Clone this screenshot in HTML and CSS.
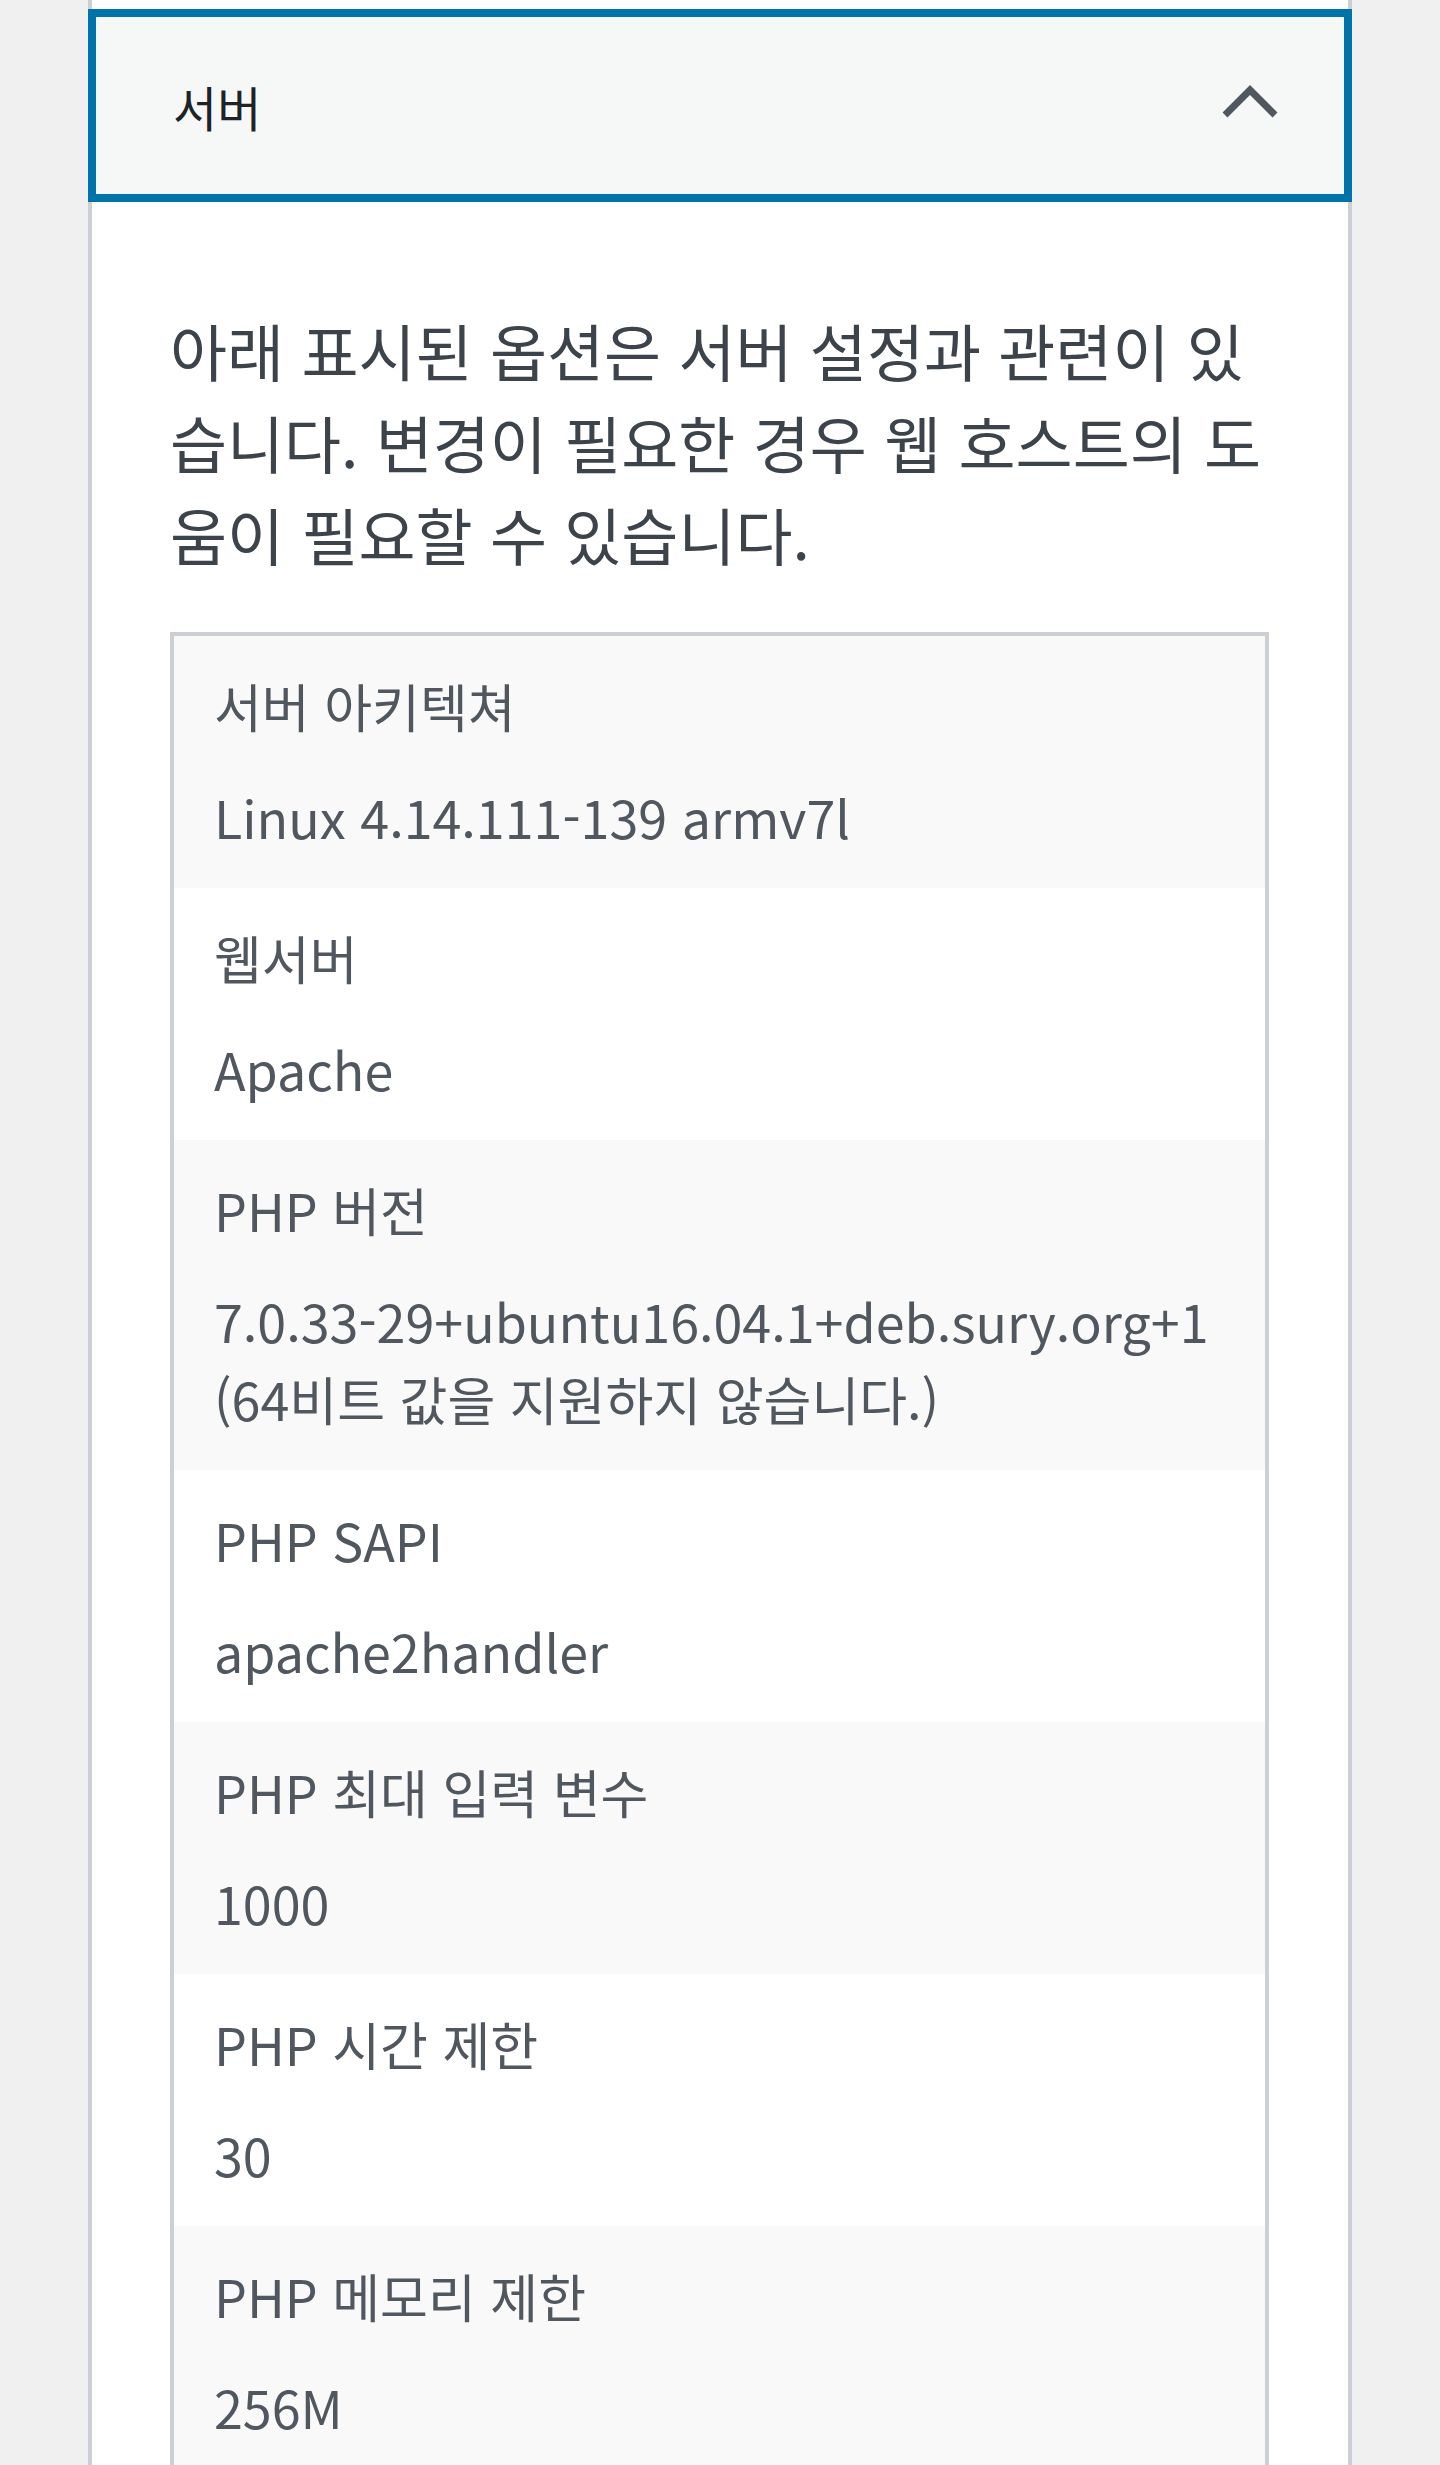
FILE: index.html
```html
<!DOCTYPE html>
<html lang="ko">
<head>
<meta charset="utf-8">
<title>사이트 건강 정보 - 서버</title>
<link rel="stylesheet" href="styles.css">
</head>
<body>
<div class="page">
  <section class="accordion">
    <div class="prev-item"></div>
    <h3 class="acc-heading">
      <button class="acc-trigger" type="button" aria-expanded="true">
        <span class="acc-title">서버</span>
        <svg class="acc-icon" width="56" height="36" viewBox="0 0 56 36" aria-hidden="true">
          <polyline points="3,31 28,6 53,31" fill="none" stroke="#50575e" stroke-width="7"/>
        </svg>
      </button>
    </h3>
    <div class="acc-panel">
      <p class="acc-desc">아래 표시된 옵션은 서버 설정과 관련이 있습니다. 변경이 필요한 경우 웹 호스트의 도움이 필요할 수 있습니다.</p>
      <table class="info-table">
        <tbody>
          <tr class="row-odd"><td class="cell-label">서버 아키텍쳐</td><td class="cell-value">Linux 4.14.111-139 armv7l</td></tr>
          <tr><td class="cell-label">웹서버</td><td class="cell-value">Apache</td></tr>
          <tr class="row-odd"><td class="cell-label">PHP 버전</td><td class="cell-value">7.0.33-29+ubuntu16.04.1+deb.sury.org+1 (64비트 값을 지원하지 않습니다.)</td></tr>
          <tr><td class="cell-label">PHP SAPI</td><td class="cell-value">apache2handler</td></tr>
          <tr class="row-odd"><td class="cell-label">PHP 최대 입력 변수</td><td class="cell-value">1000</td></tr>
          <tr><td class="cell-label">PHP 시간 제한</td><td class="cell-value">30</td></tr>
          <tr class="row-odd"><td class="cell-label">PHP 메모리 제한</td><td class="cell-value">256M</td></tr>
        </tbody>
      </table>
    </div>
  </section>
</div>
</body>
</html>
```

FILE: styles.css
```css
html, body {
  margin: 0;
  padding: 0;
  background: #f0f0f1;
}

body {
  font-family: "Noto Sans CJK KR", "Noto Sans", sans-serif;
  color: #3c434a;
}

.page {
  padding: 0 88px;
}

.accordion {
  background: #fff;
  border-left: 4px solid #ccd0d4;
  border-right: 4px solid #ccd0d4;
}

.prev-item {
  height: 9px;
}

.acc-heading {
  margin: 0 -4px;
  font-size: inherit;
  font-weight: 400;
}

.acc-trigger {
  display: flex;
  align-items: center;
  justify-content: space-between;
  width: 100%;
  height: 193px;
  box-sizing: border-box;
  margin: 0;
  padding: 0 66px 8px 77px;
  border: 8px solid #0073aa;
  background: #f6f7f7;
  font-family: inherit;
  font-size: 48px;
  line-height: 1.5;
  color: #1d2327;
  text-align: left;
  cursor: pointer;
}

.acc-title {
  display: block;
  padding-top: 8px;
}

.acc-icon {
  display: block;
}

.acc-panel {
  padding: 102px 79px 0 78px;
}

.acc-desc {
  margin: 0 0 52px;
  font-size: 62px;
  line-height: 92px;
  color: #3c434a;
}

.info-table {
  width: 100%;
  border-collapse: collapse;
  border: 4px solid #ccd0d4;
  font-size: 52px;
  line-height: 78px;
  color: #50575e;
}

.info-table tr {
  display: block;
  background: #fff;
}

.info-table tr.row-odd {
  background: #f9f9f9;
}

.info-table td {
  display: block;
  padding: 0 40px;
}

.info-table .cell-label {
  padding-top: 31px;
}

.info-table .cell-value {
  padding-top: 33px;
  padding-bottom: 32px;
}
```
